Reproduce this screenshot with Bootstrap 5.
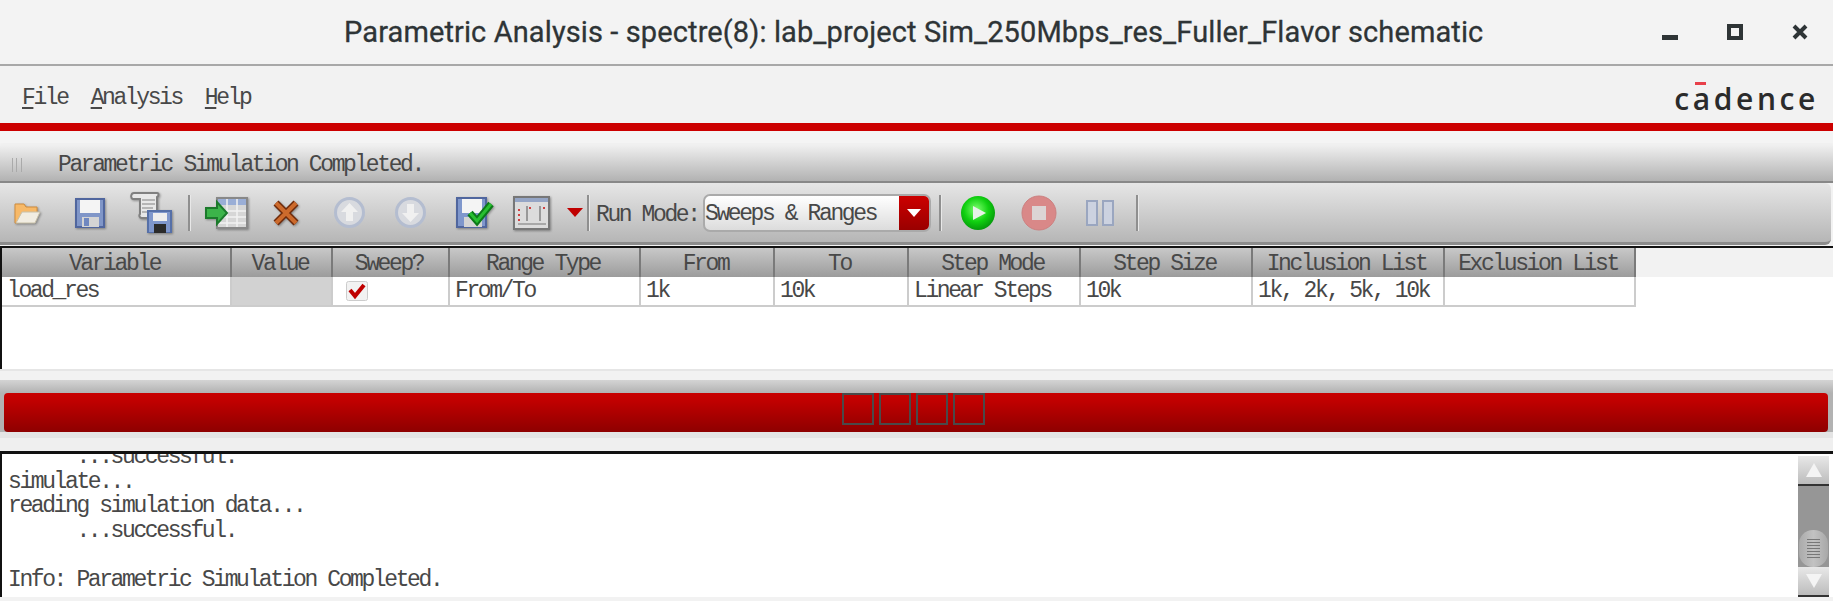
<!DOCTYPE html>
<html lang="en">
<head>
<meta charset="UTF-8">
<title>Parametric Analysis</title>
<link href="https://cdn.jsdelivr.net/npm/bootstrap@5.3.0/dist/css/bootstrap.min.css" rel="stylesheet">
<style>
html, body { height: 601px; overflow: hidden; }
body { background: #f2f2f2; color: #484848; font-family: "Liberation Mono", monospace; font-size: 23px; letter-spacing: -2.4px; line-height: 24.5px; }
.win-title { height: 66px; border-bottom: 2px solid #a8a8a8; background: #f3f3f3; }
.win-name { font-family: Roboto, sans-serif; font-size: 29px; font-weight: 400; letter-spacing: .11px; color: #2e3436; -webkit-text-stroke: .3px #2e3436; margin-left: 344px; width: 1139px; white-space: nowrap; }
.win-btns { margin-left: 179px; gap: 49px; }
.menu-row { height: 57px; padding: 8px 14px 0 22px; }
.menu-row u { text-underline-offset: 3px; }
.menu-items { gap: 23px; }
.brand { font-family: "Open Sans", sans-serif; font-size: 30px; font-weight: 600; letter-spacing: 3.6px; color: #2b2b2b; line-height: 1; position: relative; }
.brand-dash { position: absolute; left: 21px; top: -2px; width: 11px; height: 3px; background: #e8404a; }
.red-rule { height: 8px; background: #cc0000; }
.rule-gap { height: 12px; background: #f4f4f4; }
.status-row { height: 40px; background: linear-gradient(#f0f0f0 5%, #b2b2b2); border-bottom: 2px solid #888; border-radius: 4px 4px 0 0; padding: 6px 0 0 12px; }
.grip { width: 10px; height: 14px; border-left: 1px solid #aaa; border-right: 1px solid #aaa; position: relative; margin-right: 36px; }
.grip::after { content: ""; position: absolute; left: 3px; top: 0; bottom: 0; width: 1px; background: #aaa; }
.tool-row { height: 62px; background: linear-gradient(#e6e6e6, #b6b6b6); border-bottom: 3px solid #8c8c8c; border-radius: 0 6px 6px 0; margin-right: 2px; }
.tool-row svg { flex: none; }
.tool-row .has-shadow { filter: drop-shadow(1px 1px 1px rgba(0,0,0,.35)); }
.t-sep { flex: none; width: 2px; height: 36px; background: #8f8f8f; box-shadow: 1px 0 0 #e8e8e8; }
.runmode { margin-left: 7px; width: 107px; padding-top: 5px; white-space: nowrap; }
.combo { width: 228px; height: 38px; border: 2px solid #aaa; border-radius: 7px; overflow: hidden; background: linear-gradient(#fff, #dcdcdc); }
.combo-arrow { width: 30px; height: 100%; background: linear-gradient(#cc0000, #990000); }
.var-pane { height: 123px; border-top: 2px solid #111; border-left: 2px solid #111; background: linear-gradient(#f2f2f2 29px, #fff 29px); margin-top: 1px; }
.var-table { table-layout: fixed; width: 1634px; margin: 0; border-collapse: separate; border-spacing: 0; }
.var-table th { height: 29px; padding: 3px 3px 0 0; font-weight: 400; text-align: center; background: linear-gradient(#c8c8c8, #9c9c9c); color: #484848; border: 0; border-right: 2px solid #7a7a7a; vertical-align: middle; }
.var-table td { height: 30px; padding: 0 0 0 5px; background: #fff; color: #484848; border: 0; border-right: 2px solid #ccc; border-bottom: 2px solid #ccc; vertical-align: middle; white-space: nowrap; }
.var-table td.cell-off { background: #d2d2d2; }
.var-table td.cell-check { padding: 0 0 0 13px; }
.sash-top { height: 11px; background: #f2f2f2; border-top: 2px solid #e6e6e6; }
.sash-grey { height: 13px; background: linear-gradient(#d4d4d4, #b2b2b2); }
.sash-frame { height: 39px; background: #b2b2b2; padding: 0 5px 0 4px; }
.red-bar { height: 39px; border-radius: 4px; background: linear-gradient(#c80000, #c00000 20%, #8e0000); padding-left: 838px; gap: 5px; }
.sash-cell { width: 32px; height: 32px; border: 2px solid #4a4a4a; }
.sash-low { height: 19px; background: #efefef; border-top: 6px solid #e4e4e4; }
.log-pane { height: 146px; border-top: 3px solid #111; border-left: 2px solid #111; background: #fff; overflow: hidden; }
.log-text { flex: 1; margin: -9px 0 0 6px; white-space: pre; }
.scroll-col { width: 31px; margin: 2px 4px 0 0; background: #969696; }
.scroll-btn { height: 30px; flex: none; background: linear-gradient(#e8e8e8, #bcbcbc); border-bottom: 2px solid #333; }
.scroll-thumb { width: 29px; height: 37px; flex: none; margin: 44px 0 0 1px; border-radius: 14px; background: linear-gradient(90deg, #aaa, #c2c2c2 50%, #a8a8a8); }
.scroll-lines { width: 13px; height: 20px; background: repeating-linear-gradient(#777 0 1px, transparent 1px 3px); }
</style>
</head>
<body>
<div class="win-title d-flex align-items-center">
    <div class="win-name">Parametric Analysis - spectre(8): lab_project Sim_250Mbps_res_Fuller_Flavor schematic</div>
    <div class="win-btns d-flex align-items-center">
        <svg width="16" height="16" viewBox="0 0 16 16"><rect x="0" y="11" width="16" height="5" fill="#2e3436"/></svg>
        <svg width="16" height="16" viewBox="0 0 16 16"><rect x="2" y="2" width="12" height="12" fill="none" stroke="#2e3436" stroke-width="4"/></svg>
        <svg width="16" height="16" viewBox="0 0 16 16"><path d="M2 2L14 14M14 2L2 14" stroke="#2e3436" stroke-width="4"/></svg>
    </div>
</div>

<div class="menu-row d-flex align-items-center justify-content-between">
    <div class="menu-items d-flex">
        <span><u>F</u>ile</span><span><u>A</u>nalysis</span><span><u>H</u>elp</span>
    </div>
    <div class="brand"><span class="brand-dash"></span>cadence</div>
</div>
<div class="red-rule"></div>
<div class="rule-gap"></div>

<div class="status-row d-flex align-items-center">
    <span class="grip"></span>Parametric Simulation Completed.
</div>

<div class="tool-row d-flex align-items-center">
    <!-- open -->
    <svg class="has-shadow" style="margin-left:14px" width="27" height="24" viewBox="0 0 27 24"><path d="M1 22V3h9l2 3h11v6H8L4 22z" fill="#f7b968" stroke="#d08c3c"/><path d="M2 22l6-11h18l-5 11z" fill="#f1ede2" stroke="#c8c0a8"/></svg>
    <!-- save -->
    <svg class="has-shadow" style="margin-left:34px" width="30" height="30" viewBox="0 0 30 30"><rect x="1" y="1" width="28" height="28" fill="#8096c8" stroke="#50669e" stroke-width="2"/><rect x="5" y="2" width="20" height="13" fill="#f4f4f4"/><rect x="7" y="19" width="17" height="10" fill="#d4d4d4"/><rect x="9" y="20" width="5" height="8" fill="#7088c0"/></svg>
    <!-- save log -->
    <svg class="has-shadow" style="margin-left:25px" width="42" height="41" viewBox="0 0 42 41"><path d="M4 1h23c2 0 2 3 0 4v19l3 2H12c-3 0-3-3-2-4V7H3C0 6 1 1 4 1z" fill="#e8e8e8" stroke="#808080" stroke-width="2"/><path d="M12 8h13M12 12h13M12 16h11M12 20h6" stroke="#a4a4a4" stroke-width="1.5"/><rect x="18" y="19" width="23" height="22" fill="#7f97cc" stroke="#5670a8" stroke-width="2"/><rect x="23" y="21" width="14" height="8" fill="#eee"/><rect x="24" y="32" width="12" height="9" fill="#2b2b2b"/></svg>
    <span class="t-sep" style="margin-left:16px"></span>
    <!-- load table -->
    <svg class="has-shadow" style="margin-left:15px" width="44" height="34" viewBox="0 0 44 34"><rect x="12" y="2" width="30" height="30" fill="#d6d6d6" stroke="#888" stroke-width="2"/><rect x="13" y="3" width="28" height="6" fill="#9aaed6"/><path d="M13 15h28M13 21h28M13 27h28M22 3v28M32 3v28" stroke="#f2f2f2" stroke-width="1.5"/><path d="M1 12h11V6l10 11-10 11v-6H1z" fill="#3cb44a" stroke="#1c7a2c" stroke-width="2"/></svg>
    <!-- delete -->
    <svg class="has-shadow" style="margin-left:24px" width="26" height="26" viewBox="0 0 26 26"><path d="M3 3L23 23M23 3L3 23" stroke="#6e2a0a" stroke-width="7"/><path d="M3 3L23 23M23 3L3 23" stroke="#cc6a2c" stroke-width="4"/></svg>
    <!-- move up, disabled -->
    <svg style="margin-left:35px" width="31" height="31" viewBox="0 0 31 31"><circle cx="15.5" cy="15.5" r="14" fill="#d8dadf" stroke="#b4bdd0" stroke-width="3"/><path d="M15.5 6L24 15h-5v9h-7v-9H7z" fill="#f0f0f0"/></svg>
    <!-- move down, disabled -->
    <svg style="margin-left:30px" width="31" height="31" viewBox="0 0 31 31"><circle cx="15.5" cy="15.5" r="14" fill="#d8dadf" stroke="#b4bdd0" stroke-width="3"/><path d="M15.5 25L24 16h-5V7h-7v9H7z" fill="#f0f0f0"/></svg>
    <!-- save and check -->
    <svg class="has-shadow" style="margin-left:30px" width="38" height="31" viewBox="0 0 38 31"><rect x="1" y="1" width="29" height="29" fill="#7f97cc" stroke="#50669e" stroke-width="2"/><rect x="6" y="2" width="20" height="14" fill="#f4f4f4"/><rect x="8" y="20" width="18" height="10" fill="#d4d4d4"/><path d="M14 16l7 8L35 7" fill="none" stroke="#0c7a18" stroke-width="7"/><path d="M14 16l7 8L35 7" fill="none" stroke="#28c030" stroke-width="3"/></svg>
    <!-- sweep window -->
    <svg class="has-shadow" style="margin-left:19px" width="37" height="34" viewBox="0 0 37 34"><rect x="1" y="1" width="35" height="32" fill="#dcdcdc" stroke="#777" stroke-width="2"/><rect x="2" y="2" width="33" height="4" fill="#95a5c5"/><path d="M14 10v15M27 10v15" stroke="#999" stroke-width="2"/><path d="M5 28h28" stroke="#a8a8a8" stroke-width="2"/><path d="M6 13v2M6 18v2M6 23v2M17 11v2M31 11v2" stroke="#d04040" stroke-width="2"/></svg>
    <svg style="margin-left:17px" width="16" height="9" viewBox="0 0 16 9"><path d="M0 0h16L8 9z" fill="#c00000"/></svg>
    <span class="t-sep" style="margin-left:4px"></span>
    <span class="runmode">Run Mode:</span>
    <div class="combo d-flex align-items-center justify-content-between">
        <span class="pt-1">Sweeps &amp; Ranges</span>
        <span class="combo-arrow d-flex align-items-center justify-content-center">
            <svg width="14" height="8" viewBox="0 0 14 8"><path d="M0 0h14L7 8z" fill="#fff"/></svg>
        </span>
    </div>
    <span class="t-sep" style="margin-left:8px"></span>
    <!-- run -->
    <svg style="margin-left:19px" width="36" height="36" viewBox="0 0 36 36"><defs><radialGradient id="gplay" cx=".45" cy=".4" r=".6"><stop offset="0" stop-color="#80ff70"/><stop offset=".6" stop-color="#10d010"/><stop offset="1" stop-color="#069a0c"/></radialGradient></defs><circle cx="18" cy="18" r="17" fill="url(#gplay)"/><path d="M13 11l13 7-13 7z" fill="#e8f2e8"/></svg>
    <!-- stop, disabled -->
    <svg style="margin-left:25px" width="36" height="36" viewBox="0 0 36 36"><circle cx="18" cy="18" r="17" fill="#d98888" stroke="#cc8080"/><rect x="11" y="11" width="14" height="14" fill="#dcd4d4"/></svg>
    <!-- pause, disabled -->
    <svg style="margin-left:29px" width="29" height="26" viewBox="0 0 29 26"><rect x="1" y="1" width="10" height="24" fill="#ccd2e0" stroke="#9aa6c0" stroke-width="2"/><rect x="17" y="1" width="10" height="24" fill="#ccd2e0" stroke="#9aa6c0" stroke-width="2"/></svg>
    <span class="t-sep" style="margin-left:21px"></span>
</div>

<div class="var-pane">
    <table class="table var-table">
        <colgroup>
            <col style="width:230px"><col style="width:101px"><col style="width:117px"><col style="width:191px"><col style="width:134px"><col style="width:134px"><col style="width:172px"><col style="width:172px"><col style="width:192px"><col style="width:191px">
        </colgroup>
        <thead>
            <tr><th>Variable</th><th>Value</th><th>Sweep?</th><th>Range Type</th><th>From</th><th>To</th><th>Step Mode</th><th>Step Size</th><th>Inclusion List</th><th>Exclusion List</th></tr>
        </thead>
        <tbody>
            <tr>
                <td>load_res</td>
                <td class="cell-off"></td>
                <td class="cell-check"><svg width="22" height="20" viewBox="0 0 22 20" class="d-block"><rect x=".5" y=".5" width="21" height="19" rx="2" fill="#f2f2f2" stroke="#ccc"/><path d="M4 9l5 6 9-11" fill="none" stroke="#c00000" stroke-width="4"/></svg></td>
                <td>From/To</td><td>1k</td><td>10k</td><td>Linear Steps</td><td>10k</td><td>1k, 2k, 5k, 10k</td><td></td>
            </tr>
        </tbody>
    </table>
</div>

<div class="sash-top"></div>
<div class="sash-grey"></div>
<div class="sash-frame">
    <div class="red-bar d-flex">
        <span class="sash-cell"></span><span class="sash-cell"></span><span class="sash-cell"></span><span class="sash-cell"></span>
    </div>
</div>
<div class="sash-low"></div>

<div class="log-pane d-flex">
<div class="log-text">      ...successful.
simulate...
reading simulation data...
      ...successful.

Info: Parametric Simulation Completed.</div>
    <div class="scroll-col d-flex flex-column">
        <div class="scroll-btn d-flex align-items-center justify-content-center"><svg width="16" height="14" viewBox="0 0 16 14"><path d="M8 0l8 14H0z" fill="#f4f4f4"/></svg></div>
        <div class="scroll-thumb d-flex align-items-center justify-content-center"><span class="scroll-lines"></span></div>
        <div class="scroll-btn d-flex align-items-center justify-content-center"><svg width="16" height="14" viewBox="0 0 16 14"><path d="M8 14L16 0H0z" fill="#f4f4f4"/></svg></div>
    </div>
</div>
</body>
</html>
